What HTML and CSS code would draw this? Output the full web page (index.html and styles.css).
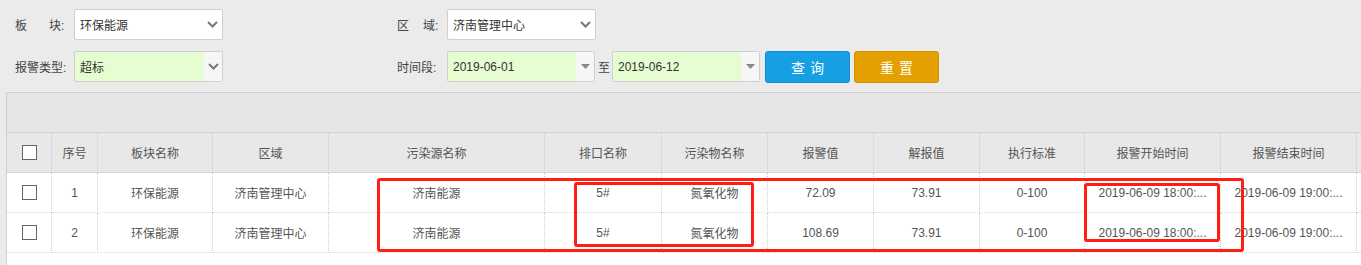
FILE: index.html
```html
<!DOCTYPE html>
<html lang="zh-CN">
<head>
    <meta charset="UTF-8">
    <meta name="viewport" content="width=device-width, initial-scale=1.0">
    <title>报警查询</title>
    <link rel="stylesheet" href="styles.css">
</head>
<body>
<div class="page">

    <form class="search" action="">
        <div class="search-row">
            <div class="field">
                <label class="field-label">板<i class="gap gap-wide"></i>块:</label>
                <div class="select">
                    <span class="select-text">环保能源</span>
                    <span class="select-arrow">
                        <svg width="11" height="7" viewBox="0 0 11 7"><path d="M1 1 L5.5 5.5 L10 1" fill="none" stroke="#777" stroke-width="2"/></svg>
                    </span>
                </div>
            </div>
            <div class="field">
                <label class="field-label field-label-short">区<i class="gap"></i>域:</label>
                <div class="select">
                    <span class="select-text">济南管理中心</span>
                    <span class="select-arrow">
                        <svg width="11" height="7" viewBox="0 0 11 7"><path d="M1 1 L5.5 5.5 L10 1" fill="none" stroke="#777" stroke-width="2"/></svg>
                    </span>
                </div>
            </div>
        </div>

        <div class="search-row">
            <div class="field">
                <label class="field-label">报警类型:</label>
                <div class="select select-green">
                    <span class="select-text">超标</span>
                    <span class="select-arrow">
                        <svg width="11" height="7" viewBox="0 0 11 7"><path d="M1 1 L5.5 5.5 L10 1" fill="none" stroke="#777" stroke-width="2"/></svg>
                    </span>
                </div>
            </div>
            <div class="field">
                <label class="field-label field-label-short">时间段:</label>
                <div class="select select-green select-date">
                    <span class="select-text">2019-06-01</span>
                    <span class="select-arrow">
                        <svg width="9" height="5" viewBox="0 0 9 5"><path d="M0 0 L9 0 L4.5 5 Z" fill="#888"/></svg>
                    </span>
                </div>
                <span class="to">至</span>
                <div class="select select-green select-date">
                    <span class="select-text">2019-06-12</span>
                    <span class="select-arrow">
                        <svg width="9" height="5" viewBox="0 0 9 5"><path d="M0 0 L9 0 L4.5 5 Z" fill="#888"/></svg>
                    </span>
                </div>
                <button type="button" class="btn btn-query">查询</button>
                <button type="button" class="btn btn-reset">重置</button>
            </div>
        </div>
    </form>

    <div class="grid-panel">
        <div class="grid-toolbar"></div>
        <table class="grid">
            <colgroup>
                <col style="width:45px">
                <col style="width:46px">
                <col style="width:115px">
                <col style="width:116px">
                <col style="width:216px">
                <col style="width:117px">
                <col style="width:106px">
                <col style="width:106px">
                <col style="width:106px">
                <col style="width:105px">
                <col style="width:136px">
                <col style="width:136px">
                <col style="width:100px">
            </colgroup>
            <thead>
                <tr>
                    <th><span class="check"></span></th>
                    <th>序号</th>
                    <th>板块名称</th>
                    <th>区域</th>
                    <th>污染源名称</th>
                    <th>排口名称</th>
                    <th>污染物名称</th>
                    <th>报警值</th>
                    <th>解报值</th>
                    <th>执行标准</th>
                    <th>报警开始时间</th>
                    <th>报警结束时间</th>
                    <th></th>
                </tr>
            </thead>
            <tbody>
                <tr>
                    <td><span class="check"></span></td>
                    <td>1</td>
                    <td>环保能源</td>
                    <td>济南管理中心</td>
                    <td>济南能源</td>
                    <td>5#</td>
                    <td>氮氧化物</td>
                    <td>72.09</td>
                    <td>73.91</td>
                    <td>0-100</td>
                    <td>2019-06-09 18:00:...</td>
                    <td>2019-06-09 19:00:...</td>
                    <td></td>
                </tr>
                <tr>
                    <td><span class="check"></span></td>
                    <td>2</td>
                    <td>环保能源</td>
                    <td>济南管理中心</td>
                    <td>济南能源</td>
                    <td>5#</td>
                    <td>氮氧化物</td>
                    <td>108.69</td>
                    <td>73.91</td>
                    <td>0-100</td>
                    <td>2019-06-09 18:00:...</td>
                    <td>2019-06-09 19:00:...</td>
                    <td></td>
                </tr>
            </tbody>
        </table>
    </div>

    <!-- red annotation boxes drawn over the grid -->
    <div class="mark mark-rows"></div>
    <div class="mark mark-outlet"></div>
    <div class="mark mark-start"></div>

</div>
</body>
</html>
```

FILE: styles.css
```css
* {
    margin: 0;
    padding: 0;
    box-sizing: border-box;
}

body {
    background-color: #ebebeb;
    font-family: "Liberation Sans", "Noto Sans CJK SC", sans-serif;
    font-size: 12px;
    color: #444;
    overflow: hidden;
}

.page {
    position: relative;
    height: 265px;
}

/* search form */

.search {
    padding: 9px 0 10px 15px;
}

.search-row {
    display: flex;
    height: 31px;
}

.search-row + .search-row {
    margin-top: 11px;
}

.field {
    display: flex;
    align-items: center;
    width: 382px;
    flex-shrink: 0;
}

.field:last-child {
    width: auto;
}

.field > * {
    flex-shrink: 0;
}

.field-label {
    width: 59px;
    display: flex;
    align-items: center;
    white-space: nowrap;
    color: #444;
}

.field-label-short {
    width: 50px;
}

.gap {
    display: inline-block;
    width: 14px;
}

.gap-wide {
    width: 22px;
}

.select {
    width: 149px;
    height: 31px;
    display: flex;
    align-items: center;
    background-color: #fff;
    border: 1px solid #d0d0d0;
    border-radius: 2px;
}

.select-text {
    flex: 1;
    padding-left: 5px;
    color: #333;
}

.select-arrow {
    width: 18px;
    height: 100%;
    display: flex;
    align-items: center;
    justify-content: center;
    margin-right: 1px;
}

.select-green {
    background-color: #e5fdd1;
}

.select-green .select-arrow {
    background-color: #f6f6f6;
    margin-right: 0;
}

.select-date {
    width: 148px;
}

.to {
    margin: 0 2px 0 3px;
    color: #444;
}

.btn {
    width: 85px;
    height: 32px;
    border-radius: 3px;
    color: #fff;
    font-family: "Noto Sans CJK SC", sans-serif;
    font-size: 14px;
    letter-spacing: 5px;
    padding-left: 5px;
    cursor: pointer;
}

.btn-query {
    margin-left: 5px;
    background-color: #169fe3;
    border: 1px solid #0f8dcc;
}

.btn-reset {
    margin-left: 4px;
    background-color: #e3a000;
    border: 1px solid #cf9100;
}

/* grid */

.grid-panel {
    margin-left: 6px;
    height: 173px;
    background-color: #fff;
    border-left: 1px solid #cfcfcf;
    border-top: 1px solid #cfcfcf;
    overflow: hidden;
}

.grid-toolbar {
    height: 40px;
    background-color: #e6e6e6;
    border-bottom: 1px solid #cfcfcf;
}

.grid {
    table-layout: fixed;
    width: 1450px;
    border-collapse: separate;
    border-spacing: 0;
}

.grid th,
.grid td {
    height: 40px;
    text-align: center;
    white-space: nowrap;
    overflow: hidden;
    border-right: 1px dotted #cfcfcf;
    font-weight: normal;
    color: #555;
}

.grid th {
    background-color: #e8e8e8;
    border-bottom: 1px solid #d6d6d6;
}

.grid td {
    border-bottom: 1px dotted #dcdcdc;
}

.check {
    display: inline-block;
    width: 15px;
    height: 15px;
    border: 1px solid #666;
    background-color: #fff;
    vertical-align: middle;
}

/* annotations */

.mark {
    position: absolute;
    border: 3px solid #fe1e12;
    border-radius: 3px;
}

.mark-rows {
    left: 377px;
    top: 178px;
    width: 867px;
    height: 74px;
}

.mark-outlet {
    left: 574px;
    top: 182px;
    width: 180px;
    height: 65px;
}

.mark-start {
    left: 1084px;
    top: 183px;
    width: 136px;
    height: 59px;
}
```
